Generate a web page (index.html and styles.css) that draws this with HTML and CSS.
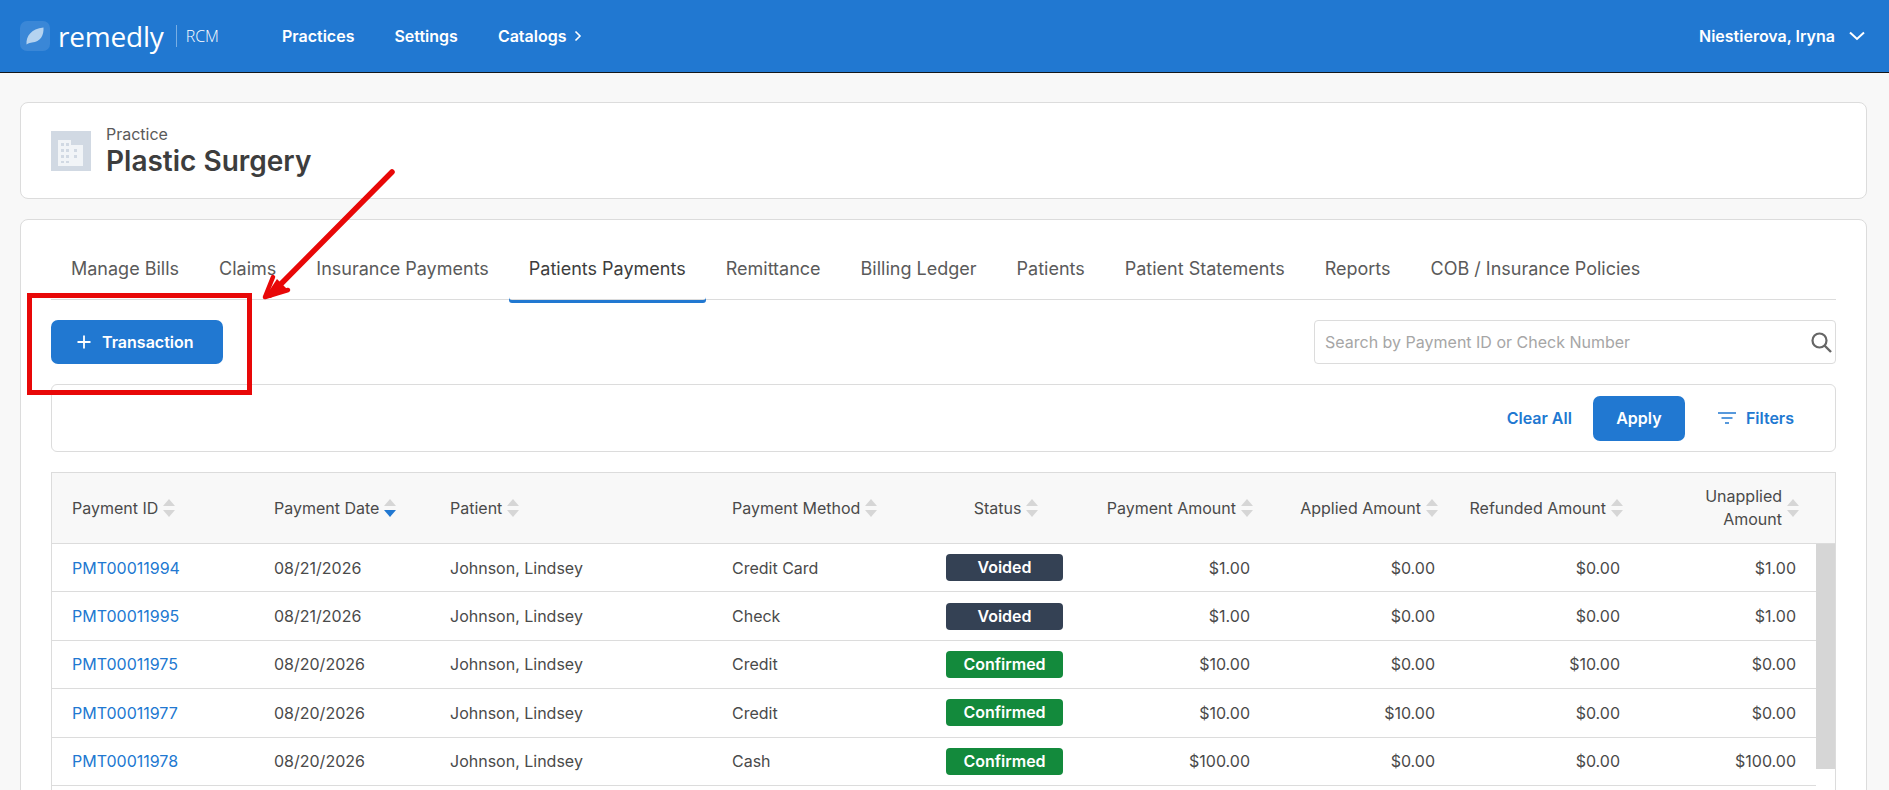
FILE: index.html
```html
<!DOCTYPE html>
<html lang="en">
<head>
    <meta charset="UTF-8">
    <title>Patients Payments | Remedly RCM</title>
    <link rel="stylesheet" href="styles.css">
</head>
<body>
    <header class="topbar">
        <div class="brand">
            <span class="brand-tile">
                <svg width="20" height="20" viewBox="0 0 20 20"><path d="M1.5 18.5C1 10 6 3 18.500 1.500C19 9 15.500 16 7 16.500C5.500 16.600 4 17 1.500 18.500Z" fill="#b5d3f0"/></svg>
            </span>
            <span class="brand-name">remedly</span>
            <span class="brand-sub">RCM</span>
        </div>
        <nav class="topnav">
            <a href="#">Practices</a>
            <a href="#">Settings</a>
            <a href="#">Catalogs
                <svg width="10" height="12" viewBox="0 0 10 12"><path d="M2.500 1.500L7 6L2.500 10.500" fill="none" stroke="#fff" stroke-width="1.600"/></svg>
            </a>
        </nav>
        <a class="user" href="#">Niestierova, Iryna
            <svg width="16" height="10" viewBox="0 0 16 10"><path d="M1 1.500L8 8L15 1.500" fill="none" stroke="#fff" stroke-width="2"/></svg>
        </a>
    </header>

    <main class="content">
        <section class="card practice">
            <span class="practice-icon">
                <svg width="40" height="40" viewBox="0 0 40 40">
                    <path d="M7 9H20V14H32V35H7Z" fill="#f1f4f7"/>
                    <path d="M10 12h3v3h-3zM15 12h3v3h-3zM10 18h3v3h-3zM15 18h3v3h-3zM10 24h3v3h-3zM15 24h3v3h-3zM10 30h3v2h-3zM15 30h3v2h-3zM23 18h3v3h-3zM23 24h3v3h-3z" fill="#d1d9e3"/>
                </svg>
            </span>
            <div>
                <div class="practice-label">Practice</div>
                <h1 class="practice-name">Plastic Surgery</h1>
            </div>
        </section>

        <section class="card panel">
            <nav class="tabs">
                <a href="#">Manage Bills</a>
                <a href="#">Claims</a>
                <a href="#">Insurance Payments</a>
                <a href="#" class="active">Patients Payments</a>
                <a href="#">Remittance</a>
                <a href="#">Billing Ledger</a>
                <a href="#">Patients</a>
                <a href="#">Patient Statements</a>
                <a href="#">Reports</a>
                <a href="#">COB / Insurance Policies</a>
            </nav>

            <div class="toolbar">
                <button class="btn btn-add">
                    <svg width="16" height="16" viewBox="0 0 16 16"><path d="M8 1.500V14.500M1.500 8H14.500" stroke="#fff" stroke-width="1.800"/></svg>
                    Transaction
                </button>
                <div class="search">
                    <input type="text" placeholder="Search by Payment ID or Check Number">
                    <svg width="24" height="24" viewBox="0 0 24 24"><circle cx="10.500" cy="10.500" r="7" fill="none" stroke="#666" stroke-width="2.200"/><path d="M15.500 15.500L22 22" stroke="#666" stroke-width="2.400"/></svg>
                </div>
            </div>

            <div class="filterbar">
                <a class="clear" href="#">Clear All</a>
                <button class="btn btn-apply">Apply</button>
                <a class="filters" href="#">
                    <svg width="18" height="14" viewBox="0 0 18 14"><path d="M0 2H18M3.500 7H14.500M7 12H11" stroke="#2178d1" stroke-width="1.700"/></svg>
                    Filters
                </a>
            </div>

            <div class="grid">
                <div class="row head">
                    <div class="cell">Payment ID <span class="sort"></span></div>
                    <div class="cell">Payment Date <span class="sort desc"></span></div>
                    <div class="cell">Patient <span class="sort"></span></div>
                    <div class="cell">Payment Method <span class="sort"></span></div>
                    <div class="cell center">Status <span class="sort"></span></div>
                    <div class="cell right">Payment Amount <span class="sort"></span></div>
                    <div class="cell right">Applied Amount <span class="sort"></span></div>
                    <div class="cell right">Refunded Amount <span class="sort"></span></div>
                    <div class="cell right"><span class="wrap">Unapplied<br>Amount</span> <span class="sort"></span></div>
                </div>
                <div class="rows">
                    <div class="row">
                        <div class="cell"><a href="#">PMT00011994</a></div>
                        <div class="cell">08/21/2026</div>
                        <div class="cell">Johnson, Lindsey</div>
                        <div class="cell">Credit Card</div>
                        <div class="cell center"><span class="badge voided">Voided</span></div>
                        <div class="cell right">$1.00</div>
                        <div class="cell right">$0.00</div>
                        <div class="cell right">$0.00</div>
                        <div class="cell right">$1.00</div>
                    </div>
                    <div class="row">
                        <div class="cell"><a href="#">PMT00011995</a></div>
                        <div class="cell">08/21/2026</div>
                        <div class="cell">Johnson, Lindsey</div>
                        <div class="cell">Check</div>
                        <div class="cell center"><span class="badge voided">Voided</span></div>
                        <div class="cell right">$1.00</div>
                        <div class="cell right">$0.00</div>
                        <div class="cell right">$0.00</div>
                        <div class="cell right">$1.00</div>
                    </div>
                    <div class="row">
                        <div class="cell"><a href="#">PMT00011975</a></div>
                        <div class="cell">08/20/2026</div>
                        <div class="cell">Johnson, Lindsey</div>
                        <div class="cell">Credit</div>
                        <div class="cell center"><span class="badge confirmed">Confirmed</span></div>
                        <div class="cell right">$10.00</div>
                        <div class="cell right">$0.00</div>
                        <div class="cell right">$10.00</div>
                        <div class="cell right">$0.00</div>
                    </div>
                    <div class="row">
                        <div class="cell"><a href="#">PMT00011977</a></div>
                        <div class="cell">08/20/2026</div>
                        <div class="cell">Johnson, Lindsey</div>
                        <div class="cell">Credit</div>
                        <div class="cell center"><span class="badge confirmed">Confirmed</span></div>
                        <div class="cell right">$10.00</div>
                        <div class="cell right">$10.00</div>
                        <div class="cell right">$0.00</div>
                        <div class="cell right">$0.00</div>
                    </div>
                    <div class="row">
                        <div class="cell"><a href="#">PMT00011978</a></div>
                        <div class="cell">08/20/2026</div>
                        <div class="cell">Johnson, Lindsey</div>
                        <div class="cell">Cash</div>
                        <div class="cell center"><span class="badge confirmed">Confirmed</span></div>
                        <div class="cell right">$100.00</div>
                        <div class="cell right">$0.00</div>
                        <div class="cell right">$0.00</div>
                        <div class="cell right">$100.00</div>
                    </div>
                    <div class="scroll-thumb"></div>
                </div>
            </div>
        </section>
    </main>

    <!-- red callout drawn over the page -->
    <div class="callout-box"></div>
    <svg class="callout-arrow" width="140" height="135" viewBox="0 0 140 135">
        <path d="M132 5L10 128" fill="none" stroke="#e80808" stroke-width="5.500" stroke-linecap="round"/>
        <path d="M5 130L28 123L17 112Z" fill="#e80808"/>
        <path d="M5 130L28 123M5 130L13 110" fill="none" stroke="#e80808" stroke-width="4.500" stroke-linecap="round"/>
    </svg>
</body>
</html>
```

FILE: styles.css
```css
html, body {
    margin: 0;
    padding: 0;
    height: 100vh;
    overflow: hidden;
}

body {
    position: relative;
    font-family: Inter, "Noto Sans", sans-serif;
    font-size: 16px;
    color: #4a4a4a;
    background-color: #f8f8f8;
}

a {
    color: inherit;
    text-decoration: none;
}

/* top bar */
.topbar {
    display: flex;
    align-items: center;
    height: 72px;
    padding: 0 24px 0 20px;
    background-color: #2178d1;
    border-bottom: 1px solid #14171a;
    color: white;
}

.brand {
    display: flex;
    align-items: center;
    width: 262px;
}

.brand-tile {
    display: flex;
    align-items: center;
    justify-content: center;
    width: 30px;
    height: 30px;
    border-radius: 7px;
    background-color: #3a87d7;
}

.brand-name {
    margin-left: 8px;
    font-family: "Open Sans", sans-serif;
    font-size: 28px;
    letter-spacing: -0.2px;
    line-height: 30px;
}

.brand-sub {
    margin-left: 12px;
    padding-left: 9px;
    border-left: 1px solid #78aee4;
    font-family: "Open Sans", sans-serif;
    font-size: 16px;
    font-weight: 300;
    line-height: 22px;
}

.topnav {
    display: flex;
    gap: 40px;
    font-weight: 600;
}

.topnav a {
    display: flex;
    align-items: center;
    gap: 6px;
}

.user {
    display: flex;
    align-items: center;
    gap: 14px;
    margin-left: auto;
    font-weight: 600;
}

/* cards */
.content {
    padding: 29px 22px 0 20px;
}

.card {
    background-color: white;
    border: 1px solid #dcdcdc;
    border-radius: 8px;
}

.practice {
    display: flex;
    align-items: center;
    gap: 15px;
    height: 95px;
    padding-left: 30px;
    margin-bottom: 20px;
}

.practice-icon {
    display: block;
    width: 40px;
    height: 40px;
    background-color: #d1d9e3;
}

.practice-icon svg {
    display: block;
}

.practice-label {
    font-size: 16px;
    line-height: 20px;
    color: #5a5a5a;
}

.practice-name {
    margin: 0;
    font-size: 28px;
    font-weight: 600;
    line-height: 34px;
    color: #3d3d3d;
}

.panel {
    padding: 0 30px;
    height: 700px;
}

/* tabs */
.tabs {
    display: flex;
    height: 79px;
    border-bottom: 1px solid #dcdcdc;
}

.tabs a {
    display: flex;
    align-items: flex-end;
    padding: 0 20px 18px;
    font-size: 18px;
    line-height: 24px;
    color: #5a5a5a;
    border-radius: 0 0 3px 3px;
}

.tabs a.active {
    color: #3d3d3d;
    box-shadow: inset 0 -3px 0 #2178d1;
    height: 83px;
    box-sizing: border-box;
    padding-bottom: 22px;
}

.toolbar {
    display: flex;
    justify-content: space-between;
    margin-top: 20px;
}

.btn {
    border: none;
    border-radius: 7px;
    background-color: #2178d1;
    color: white;
    font-family: inherit;
    font-size: 16px;
    font-weight: 600;
}

.btn-add {
    display: flex;
    align-items: center;
    gap: 10px;
    width: 172px;
    height: 44px;
    padding: 0 0 0 25px;
}

.search {
    display: flex;
    align-items: center;
    width: 520px;
    height: 42px;
    border: 1px solid #dcdcdc;
    border-radius: 4px;
}

.search input {
    flex: 1;
    border: none;
    outline: none;
    padding: 0 10px;
    font-family: inherit;
    font-size: 16px;
    background: none;
}

.search input::placeholder {
    color: #a6a6a6;
}

.search svg {
    margin-right: 2px;
}

/* filter row */
.filterbar {
    display: flex;
    align-items: center;
    justify-content: flex-end;
    height: 66px;
    margin-top: 20px;
    padding-right: 41px;
    border: 1px solid #dcdcdc;
    border-radius: 6px;
    color: #2178d1;
    font-weight: 600;
}

.btn-apply {
    width: 92px;
    height: 45px;
    margin: 0 33px 0 21px;
}

.filters {
    display: flex;
    align-items: center;
    gap: 10px;
}

/* table */
.grid {
    margin-top: 20px;
    border: 1px solid #dcdcdc;
    border-bottom: none;
    height: 400px;
}

.row {
    display: grid;
    grid-template-columns: 202px 176px 282px 214px 157px 187px 185px 185px 176px;
    height: 48.4px;
    align-items: center;
    border-bottom: 1px solid #dcdcdc;
    box-sizing: border-box;
}

.head {
    height: 71px;
    grid-template-columns: 202px 176px 282px 214px 157px 187px 185px 185px 176px 19px;
    background-color: #f8f8f8;
}

.rows {
    position: relative;
    width: 1764px;
}

.cell {
    padding: 0 20px;
    line-height: 24px;
    white-space: nowrap;
}

.head .cell {
    display: flex;
    align-items: center;
    gap: 5px;
    padding: 0 17px 0 20px;
}

.head .center {
    justify-content: center;
}

.head .right {
    justify-content: flex-end;
}

.right {
    text-align: right;
}

.center {
    text-align: center;
}

.wrap {
    text-align: right;
    line-height: 23px;
}

.cell a {
    color: #2178d1;
}

.sort {
    position: relative;
    flex: none;
    display: inline-block;
    width: 12px;
    height: 18px;
}

.sort::before, .sort::after {
    content: "";
    position: absolute;
    left: 0;
    border-left: 6px solid transparent;
    border-right: 6px solid transparent;
}

.sort::before {
    top: 0;
    border-bottom: 7px solid #d6d6d6;
}

.sort::after {
    bottom: 0;
    border-top: 7px solid #d6d6d6;
}

.sort.desc::after {
    border-top-color: #2178d1;
}

.badge {
    display: block;
    height: 27px;
    line-height: 27px;
    border-radius: 4px;
    color: white;
    font-weight: 600;
}

.voided {
    background-color: #344154;
}

.confirmed {
    background-color: #138a3c;
}

.scroll-thumb {
    position: absolute;
    top: 0;
    left: 1764px;
    width: 19px;
    height: 225px;
    background-color: #d6d6d6;
}

/* red annotation */
.callout-box {
    position: absolute;
    left: 27px;
    top: 293px;
    width: 215px;
    height: 92px;
    border: 5px solid #e80808;
}

.callout-arrow {
    position: absolute;
    left: 260px;
    top: 167px;
}
```
